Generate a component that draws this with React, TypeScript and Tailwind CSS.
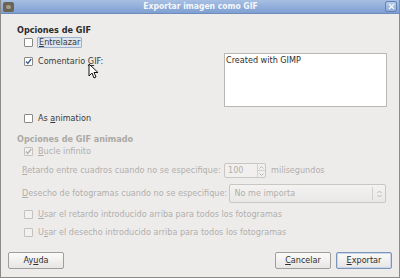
import React from "react";

const font = {
  fontFamily: '"DejaVu Sans Condensed", "DejaVu Sans", "Liberation Sans", sans-serif',
  fontStretch: "semi-condensed",
};

function Check({ checked, disabled }: { checked?: boolean; disabled?: boolean }) {
  return (
    <span
      className={`w-[9px] h-[9px] shrink-0 border flex items-center justify-center rounded-[1px] ${
        disabled ? "border-[#c4c2be] bg-[#f2f1f0]" : "border-[#8c8a87] bg-white"
      }`}
    >
      {checked && (
        <svg width="7" height="7" viewBox="0 0 7 7">
          <path
            d="M1 3.6 L2.8 5.4 L6.2 1"
            fill="none"
            stroke={disabled ? "#b3b1ad" : "#3d5f94"}
            strokeWidth="1.4"
          />
        </svg>
      )}
    </span>
  );
}

function U({ children }: { children: React.ReactNode }) {
  return <span className="underline underline-offset-[1px] decoration-[0.5px]">{children}</span>;
}

function Btn({ children, def }: { children: React.ReactNode; def?: boolean }) {
  return (
    <div
      className={`w-[56px] h-[17px] rounded-[2px] border flex items-center justify-center text-[9px] text-[#2e2e2e] bg-gradient-to-b from-[#fbfbfa] to-[#e7e6e4] ${
        def ? "border-[#7c95bb] shadow-[inset_0_0_0_1px_#c9d6ea]" : "border-[#a09e9a]"
      }`}
    >
      {children}
    </div>
  );
}

export default function App() {
  return (
    <div
      className="w-[400px] h-[278px] bg-[#edeceb] flex flex-col relative overflow-hidden border-x border-b border-[#8a8986] text-[#3a3a3a] text-[9px] leading-none whitespace-nowrap"
      style={font}
    >
      {/* title bar */}
      <div className="h-[14px] -mx-px shrink-0 bg-gradient-to-b from-[#a7bfe2] to-[#7f9fd2] border-b border-[#6d8bbb] flex items-center relative">
        <div className="w-[11px] h-[10px] ml-[3px] rounded-[2px] bg-[#6a6455] flex items-center justify-center">
          <div className="w-[5px] h-[4px] bg-[#a59c86] rounded-full" />
        </div>
        <div className="flex-1 text-center font-bold text-[8.5px] text-[#f4f7fb] pl-[2px]">
          Exportar imagen como GIF
        </div>
        <div className="w-[12px] h-[11px] mr-[3px] rounded-[2px] border border-[#6383b5] bg-gradient-to-b from-[#b8cbe8] to-[#8eabd9] flex items-center justify-center">
          <svg width="7" height="7" viewBox="0 0 7 7">
            <path d="M1 1 L6 6 M6 1 L1 6" stroke="#eef3fa" strokeWidth="1.5" />
          </svg>
        </div>
      </div>

      <div className="flex flex-col pl-[16px] pr-[13px]">
        <div className="h-[12px] mt-[10px] flex items-center font-bold text-[#2a2a2a]">Opciones de GIF</div>

        <div className="h-[11px] mt-[1px] pl-[7px] flex items-center gap-[4px]">
          <Check />
          <span className="h-[11px] px-[1px] flex items-center border border-[#9db0cc] bg-[#dfe5ee] rounded-[1px]">
            <U>E</U>ntrelazar
          </span>
        </div>

        <div className="flex mt-[5px]">
          <div className="flex-1 pl-[7px] h-[12px] mt-[2px] flex items-center gap-[5px]">
            <Check checked />
            <span>
              Comentario <U>G</U>IF:
            </span>
          </div>
          <div className="w-[163px] h-[54px] bg-white border border-[#b9b7b3] mr-[-1px] text-[9px] text-[#2e2e2e] pl-[1px] pt-[2px]">
            Created with GIMP
          </div>
        </div>

        <div className="h-[10px] mt-[6px] pl-[7px] flex items-center gap-[5px]">
          <Check />
          <span>
            As <U>a</U>nimation
          </span>
        </div>

        <div className="h-[12px] mt-[10px] flex items-center font-bold text-[#aba9a5]">Opciones de GIF animado</div>

        <div className="h-[10px] mt-[1px] pl-[7px] flex items-center gap-[5px] text-[#b1afab]">
          <Check checked disabled />
          <span>
            <U>B</U>ucle infinito
          </span>
        </div>

        <div className="h-[15px] mt-[7px] pl-[5px] flex items-center text-[#b1afab]">
          <span className="w-[202px]">
            <U>R</U>etardo entre cuadros cuando no se especifique:
          </span>
          <div className="w-[42px] h-[15px] border border-[#c9c7c3] bg-[#f1f0ef] rounded-[2px] flex">
            <span className="flex-1 pl-[3px] flex items-center">100</span>
            <div className="w-[8px] border-l border-[#d2d0cc] flex flex-col">
              <div className="flex-1 border-b border-[#d2d0cc] flex items-center justify-center">
                <svg width="5" height="3" viewBox="0 0 5 3"><path d="M0.5 2.5 L2.5 0.5 L4.5 2.5" fill="none" stroke="#b9b7b3" /></svg>
              </div>
              <div className="flex-1 flex items-center justify-center">
                <svg width="5" height="3" viewBox="0 0 5 3"><path d="M0.5 0.5 L2.5 2.5 L4.5 0.5" fill="none" stroke="#b9b7b3" /></svg>
              </div>
            </div>
          </div>
          <span className="ml-[5px]">milisegundos</span>
        </div>

        <div className="h-[19px] mt-[6px] pl-[5px] flex items-center text-[#b1afab]">
          <span className="w-[208px]">
            <U>D</U>esecho de fotogramas cuando no se especifique:
          </span>
          <div className="w-[157px] h-[19px] border border-[#c9c7c3] rounded-[2px] bg-gradient-to-b from-[#f4f3f2] to-[#e9e8e6] flex items-center">
            <span className="flex-1 pl-[4px]">No me importa</span>
            <div className="w-px h-[13px] bg-[#d2d0cc]" />
            <div className="w-[12px] flex justify-center">
              <svg width="5" height="8" viewBox="0 0 5 8">
                <path d="M0.5 3 L2.5 1 L4.5 3 M0.5 5 L2.5 7 L4.5 5" fill="none" stroke="#b9b7b3" />
              </svg>
            </div>
          </div>
        </div>

        <div className="h-[10px] mt-[6px] pl-[7px] flex items-center gap-[5px] text-[#b1afab]">
          <Check disabled />
          <span>
            <U>U</U>sar el retardo introducido arriba para todos los fotogramas
          </span>
        </div>

        <div className="h-[10px] mt-[8px] pl-[7px] flex items-center gap-[5px] text-[#b1afab]">
          <Check disabled />
          <span>
            U<U>s</U>ar el desecho introducido arriba para todos los fotogramas
          </span>
        </div>
      </div>

      <div className="mt-auto mb-[8px] flex items-center px-[7px]">
        <Btn>
          Ay<U>u</U>da
        </Btn>
        <div className="flex-1" />
        <Btn>
          <U>C</U>ancelar
        </Btn>
        <div className="w-[5px]" />
        <Btn def>
          <U>E</U>xportar
        </Btn>
      </div>

      {/* mouse cursor */}
      <svg className="absolute left-[87px] top-[63px]" width="11" height="16" viewBox="0 0 11 16">
        <path d="M1 1 L1 13 L4 10 L6 15 L8 14 L6 9.5 L10 9.5 Z" fill="#fff" stroke="#111" strokeWidth="1" strokeLinejoin="round" />
      </svg>
    </div>
  );
}
